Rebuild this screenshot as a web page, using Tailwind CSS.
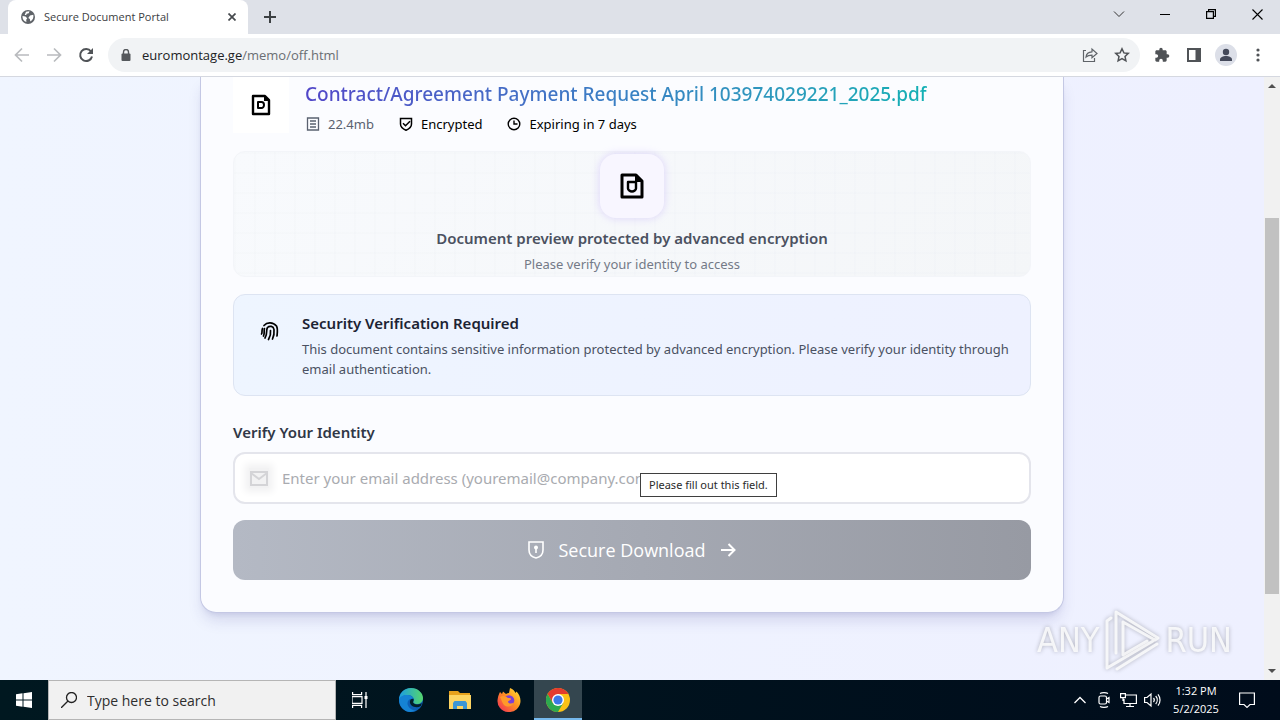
<!doctype html>
<html lang="en">

<head>
    <meta charset="utf-8">
    <meta name="viewport" content="width=device-width, initial-scale=1">
    <title>Secure Document Portal</title>
    <script src="https://cdn.jsdelivr.net/npm/@tailwindcss/browser@4"></script>
</head>
<body class="h-screen flex flex-col overflow-hidden font-['Open_Sans','Noto_Sans',sans-serif] text-black">

    <!-- tab strip -->
    <div class="h-[34px] shrink-0 bg-[#dee1e8] flex items-start pl-2">
        <div class="h-[34px] w-60 bg-white rounded-t-lg flex items-center pl-3 pr-2 text-[#3c4043]">
            <svg class="size-4 shrink-0" viewBox="0 0 16 16"><circle cx="8" cy="8" r="7" fill="#5f6368"/><path d="M2.500 7l3 .4 1.700 1.800-1 1.600.2 2.200C4 12.500 2.300 10 2.500 7zM6 2.800L9.500 2.300l-.8 2-2 .4-.5 1.400-1.500-.2zM10 6.500l3.300-.8c.6 2.600-.5 5.600-3 6.800l-.4-2.600-1.600-1z" fill="#fff"/></svg>
            <span class="ml-2 text-[11px]">Secure Document Portal</span>
            <button class="ml-auto size-4 flex items-center justify-center" aria-label="Close tab">
                <svg class="size-2" viewBox="0 0 8 8" fill="none" stroke="#45494d" stroke-width="1.700"><path d="M.5.5l7 7M7.500.5l-7 7"/></svg>
            </button>
        </div>
        <button class="ml-4 mt-[11px]" aria-label="New tab">
            <svg class="size-3" viewBox="0 0 12 12" fill="none" stroke="#3c4043" stroke-width="2"><path d="M6 0v12M0 6h12"/></svg>
        </button>
        <div class="ml-auto h-7 flex items-center">
            <button class="w-[46px] flex justify-center" aria-label="Search tabs"><svg class="w-3 h-2" viewBox="0 0 12 8" fill="none" stroke="#333"><path d="M1 1.500l5 5 5-5"/></svg></button>
            <button class="w-[46px] flex justify-center" aria-label="Minimize"><svg class="w-[10px] h-[10px]" viewBox="0 0 10 10" fill="none" stroke="#000"><path d="M0 5.500h10"/></svg></button>
            <button class="w-[46px] flex justify-center" aria-label="Restore"><svg class="w-[10px] h-[10px]" viewBox="0 0 10 10" fill="none" stroke="#000" stroke-width="1.200"><path d="M.6 2.600h6.800v6.800H.6zM2.600 2.600v-2h6.800v6.800h-2"/></svg></button>
            <button class="w-[46px] flex justify-center" aria-label="Close"><svg class="w-[11px] h-[11px]" viewBox="0 0 11 11" fill="none" stroke="#000" stroke-width="1.100"><path d="M.5.5l10 10M10.500.5l-10 10"/></svg></button>
        </div>
    </div>

    <!-- toolbar -->
    <div class="h-[43px] shrink-0 bg-white border-b border-[#d5d8e0] flex items-center pl-3 pr-[14px]">
        <div class="flex gap-3">
            <button class="size-5" aria-label="Back"><svg viewBox="0 0 20 20" fill="none" stroke="#b9bbbe" stroke-width="1.700"><path d="M17 10H4M10 3.500L3.500 10l6.500 6.500"/></svg></button>
            <button class="size-5" aria-label="Forward"><svg viewBox="0 0 20 20" fill="none" stroke="#b9bbbe" stroke-width="1.700"><path d="M3 10h13M10 3.500l6.500 6.500-6.500 6.500"/></svg></button>
            <button class="size-5" aria-label="Reload"><svg viewBox="0 0 20 20"><path d="M15 6.500A6 6 0 1 0 16 11.500" fill="none" stroke="#505357" stroke-width="2"/><path d="M17 3v6h-6z" fill="#505357"/></svg></button>
        </div>
        <div class="ml-3 flex-1 h-[34px] rounded-full bg-[#f1f3f5] flex items-center pl-3 pr-[10px]">
            <svg class="w-3 h-3" viewBox="0 0 12 12"><path d="M3.500 5V3a2.500 2.500 0 0 1 5 0v2" fill="none" stroke="#55585c" stroke-width="1.400"/><rect x="1.500" y="4.500" width="9" height="7.500" rx="1" fill="#55585c"/></svg>
            <div role="textbox" aria-label="Address" contenteditable="true" class="ml-[10px] pt-px text-[13px] text-[#6a6e73]"><span class="text-[#202124]">euromontage.ge</span>/memo/off.html</div>
            <button class="ml-auto size-4" aria-label="Share"><svg viewBox="0 0 16 16" fill="none" stroke="#5f6368" stroke-width="1.200"><path d="M4 3.500H1.500v11h11V11M4 10c.3-3 2-5 6-5.200V2l5 4.500-5 4.300V8.200C7.500 8.200 5.500 8.600 4 10z"/></svg></button>
            <button class="ml-4 size-4" aria-label="Bookmark"><svg viewBox="0 0 16 16" fill="none" stroke="#505357" stroke-width="1.500"><path d="M8 1.800l1.900 4.100 4.400.5-3.300 3 .9 4.500L8 11.700l-3.900 2.200.9-4.500-3.300-3 4.400-.5z"/></svg></button>
        </div>
        <div class="ml-[14px] flex items-center gap-4">
            <button class="size-4" aria-label="Extensions"><svg viewBox="0 0 24 24" fill="#4f5256"><path d="M20.500 11H19V7c0-1.100-.9-2-2-2h-4V3.500a2.500 2.500 0 0 0-5 0V5H4c-1.100 0-2 .9-2 2v3.800h1.500a2.700 2.700 0 0 1 0 5.400H2V20c0 1.100.9 2 2 2h3.800v-1.500a2.700 2.700 0 0 1 5.400 0V22H17c1.100 0 2-.9 2-2v-4h1.500a2.500 2.500 0 0 0 0-5z"/></svg></button>
            <button class="size-4" aria-label="Side panel"><svg viewBox="0 0 16 16"><path d="M1 1h14v14H1z" fill="#505357"/><path d="M3 3h6.500v10H3z" fill="#fff"/></svg></button>
            <button class="-mx-[3px] size-[22px]" aria-label="Profile"><svg viewBox="0 0 22 22"><circle cx="11" cy="11" r="11" fill="#dcdfe8"/><circle cx="11" cy="8" r="3.200" fill="#44495a"/><path d="M5 17v-1.500c0-2.200 3-3.500 6-3.500s6 1.300 6 3.500V17z" fill="#44495a"/></svg></button>
            <button class="size-4" aria-label="Menu"><svg viewBox="0 0 16 16" fill="#505357"><circle cx="8" cy="3" r="1.600"/><circle cx="8" cy="8" r="1.600"/><circle cx="8" cy="13" r="1.600"/></svg></button>
        </div>
    </div>

    <div class="flex-1 min-h-0 flex">
        <!-- page -->
        <main class="relative flex-1 min-w-0 overflow-hidden bg-linear-to-r from-[#f0f5ff] to-[#eef0ff] px-4 font-['Noto_Sans','Open_Sans',sans-serif]">
            <div class="max-w-[864px] mx-auto border border-t-0 border-[#c4c8e4] rounded-b-2xl bg-[#fbfcff] px-8 pb-8 shadow-lg shadow-indigo-900/15">
                <div class="flex gap-4">
                    <div class="size-14 bg-white flex items-center justify-center">
                        <svg class="w-5 h-[22px]" viewBox="0 0 20 22" fill="none" stroke="#000" stroke-width="2.400" stroke-linejoin="round"><path d="M2 2h12l4 4v14H2z"/><path d="M13 1v6h6z" fill="#000" stroke="none"/><path d="M7 8h3.500a2.500 3 0 0 1 0 6H7z" stroke-width="2"/></svg>
                    </div>
                    <div class="pt-[3px]">
                        <h1 class="text-[19px] leading-7 font-medium w-fit bg-linear-to-r from-[#5146c8] via-[#3a7fc4] to-[#12b0b4] bg-clip-text text-transparent whitespace-nowrap">Contract/Agreement Payment Request April 103974029221_2025.pdf</h1>
                        <div class="mt-[6px] flex gap-6 text-[13px] leading-5">
                            <span class="flex items-center gap-[7px] text-[#5a6170]"><svg class="size-4" viewBox="0 0 16 16" fill="none" stroke="#5a6170" stroke-width="1.300"><path d="M2.500 2h11v12h-11zM5 5h6M5 8h6M5 11h6"/></svg>22.4mb</span>
                            <span class="flex items-center gap-[7px]"><svg class="size-4" viewBox="0 0 16 16" fill="none" stroke="#000" stroke-width="1.500"><path d="M2.500 2.500h11V8c0 3-2.500 5-5.500 6.300C5 13 2.500 11 2.500 8zM5 7.300l2.500 2.500L12 5.300"/></svg>Encrypted</span>
                            <span class="flex items-center gap-[7px]"><svg class="size-4" viewBox="0 0 16 16" fill="none" stroke="#000" stroke-width="1.400"><circle cx="8" cy="8" r="5.800"/><path d="M8 4.500V8h3.500"/></svg>Expiring in 7 days</span>
                        </div>
                    </div>
                </div>

                <div class="mt-[17px] h-[126px] rounded-xl border border-[#f3f5f9] bg-[linear-gradient(#e4e7ee1c_2px,transparent_2px),linear-gradient(90deg,#e4e7ee1c_2px,transparent_2px),linear-gradient(135deg,#f8fafd,#f4f6f8)] bg-size-[20px_20px,20px_20px,auto] flex flex-col items-center">
                    <div class="mt-[2px] size-16 shrink-0 rounded-2xl bg-[#f8f6ff] shadow-[0_0_8px_#a78bfa55] flex items-center justify-center">
                        <svg class="w-6 h-[26px]" viewBox="0 0 24 26" fill="none" stroke="#000" stroke-width="3" stroke-linejoin="round"><path d="M2 2h14l6 6v16H2z"/><path d="M15 1v8h8z" fill="#000" stroke="none"/><path d="M8 9h8v6.500c0 1.500-2 3-4 3s-4-1.500-4-3z" stroke-width="2.400"/></svg>
                    </div>
                    <p class="mt-2 text-[15px] leading-6 font-semibold text-[#4b5160]">Document preview protected by advanced encryption</p>
                    <p class="mt-1 text-[13px] leading-5 text-[#747a87]">Please verify your identity to access</p>
                </div>

                <div class="mt-[17px] rounded-xl border border-[#dde4f2] bg-linear-to-r from-[#eef5ff] to-[#eef1ff] py-4 pl-6 pr-4 flex gap-5">
                    <svg class="mt-2 size-6 shrink-0" viewBox="0 0 24 24" fill="none" stroke="#000" stroke-width="1.700" stroke-linecap="round"><path d="M6 6.500C9 3 15 3 18.500 7c1.500 2.500 1 6 .5 10M4.500 9.500C3.500 12 4.500 14 3.500 15M7 19c3-5 .5-7 2.500-10.500 2-2 6-1.500 6.500 2 .3 3-.3 7-1.500 9.500M6.500 9.500c-1 3 .5 4-1 7.500M12.500 11.500c.5 3.500-.5 6.500-2 9"/></svg>
                    <div>
                        <h2 class="text-[15px] leading-6 font-semibold text-[#1c2333]">Security Verification Required</h2>
                        <p class="mt-1 text-[13px] leading-5 text-[#4a5162]">This document contains sensitive information protected by advanced encryption. Please verify your identity through email authentication.</p>
                    </div>
                </div>

                <form class="mt-6" onsubmit="return false">
                    <label for="email" class="block text-[15px] leading-6 font-semibold text-[#303746]">Verify Your Identity</label>
                    <div class="relative mt-2">
                        <input id="email" type="email" class="block w-full h-[52px] rounded-xl border-2 border-[#e4e5ec] bg-white pl-[47px] pr-4 text-[15px] placeholder:text-[#a9abb0]" placeholder="Enter your email address (youremail@company.com)">
                        <div class="absolute left-4 top-4 size-5 bg-[#f2f2f3] shadow-[0_0_7px_4px_#f2f2f3]">
                            <svg viewBox="0 0 20 20" fill="none" stroke="#d4d4d7" stroke-width="2"><path d="M2 4h16v13H2zM2 5l8 6 8-6"/></svg>
                        </div>
                        <div role="tooltip" class="absolute left-[407px] top-[21px] h-6 px-2 border border-[#3f3f3f] bg-white text-[11px] leading-[22px] text-[#2b2b2b] whitespace-nowrap">Please fill out this field.</div>
                    </div>
                    <button class="mt-4 w-full h-[60px] rounded-xl bg-linear-to-r from-[#b4b9c4] to-[#979aa3] flex items-center justify-center gap-3 text-white text-lg font-['Open_Sans','Noto_Sans',sans-serif] font-medium">
                        <svg class="size-5" viewBox="0 0 20 20" fill="none" stroke="#fff" stroke-width="1.600"><path d="M3 2h14v8c0 4-3 7-7 8-4-1-7-4-7-8zM10 8v5"/><circle cx="10" cy="7.500" r="1.200" fill="#fff"/></svg>
                        Secure Download
                        <svg class="size-5" viewBox="0 0 20 20" fill="none" stroke="#fff" stroke-width="2"><path d="M3 10h13M10.500 4l6 6-6 6"/></svg>
                    </button>
                </form>
            </div>

            <!-- watermark -->
            <div class="absolute right-8 bottom-2 flex items-center gap-1 text-white/80 font-['Liberation_Sans_Narrow','DejaVu_Sans_Condensed',sans-serif] text-[34px] drop-shadow-[0_0_2px_#0005]">
                <span>ANY</span>
                <svg class="w-[58px] h-16" viewBox="0 0 58 64" fill="none" stroke="#fff" stroke-opacity=".8" stroke-width="3" stroke-linejoin="round" stroke-linecap="round"><path d="M13 45V4l42 26-3 2-32-18M8 10l-4 3v47l46-27M20 14v33l24-14M14 61l40-25"/></svg>
                <span>RUN</span>
            </div>
        </main>

        <!-- scrollbar -->
        <div class="w-4 shrink-0 bg-[#f1f1f1] flex flex-col items-center">
            <svg class="h-[17px] w-2" viewBox="0 0 8 17" fill="#505050"><path d="M0 11l4-4 4 4z"/></svg>
            <div class="mt-[124px] w-[14px] h-[376px] bg-[#c1c1c1]"></div>
            <svg class="mt-auto h-[17px] w-2" viewBox="0 0 8 17" fill="#505050"><path d="M0 6l4 4 4-4z"/></svg>
        </div>
    </div>

    <!-- taskbar -->
    <div class="h-10 shrink-0 bg-linear-to-r from-[#001820] to-[#000c1b] flex items-center text-white">
        <button class="w-12 flex justify-center" aria-label="Start"><svg class="size-4" viewBox="0 0 16 16" fill="#fff"><path d="M0 2.200L6.500 1.300v6.200H0zM7.500 1.200L16 0v7.500H7.500zM0 8.500h6.500v6.200L0 13.800zM7.500 8.500H16V16l-8.500-1.200z"/></svg></button>
        <label class="w-72 h-10 bg-[#f1f1f1] border border-[#b5b5b5] flex items-center pl-3 gap-[10px]">
            <svg class="size-4 shrink-0" viewBox="0 0 16 16" fill="none" stroke="#222" stroke-width="1.300"><circle cx="10.500" cy="5.500" r="5"/><path d="M7 9l-7 7"/></svg>
            <input type="text" class="w-0 flex-1 text-[14px] placeholder:text-[#2e2e2e]" placeholder="Type here to search" aria-label="Search">
        </label>
        <button class="w-12 flex justify-center" aria-label="Task view"><svg class="size-4" viewBox="0 0 16 16" fill="none" stroke="#fff" stroke-width="1.200"><path d="M0 4.600h10v6.800H0zM.6 0v2.600h9V0M.6 16v-2.600h9V16M14 0v16"/><path d="M12.500 4h3v3h-3z" fill="#fff" stroke="none"/></svg></button>
        <div class="ml-[3px] flex items-center gap-px">
            <button class="w-12 flex justify-center" aria-label="Edge">
                <svg class="size-6" viewBox="0 0 24 24"><defs><linearGradient id="edge" x1="0" y1="0" x2="1" y2="0"><stop stop-color="#1b9de2"/><stop offset="1" stop-color="#55d66d"/></linearGradient></defs><circle cx="12" cy="12" r="12" fill="#0d5fb5"/><path d="M0 12C0 5 5 0 12 0s12 5 12 10c0 4-3 6-6 6-3 0-4.500-1-3.500-2.500C16 10 13 7 9 7c-4 0-8 2-9 5z" fill="url(#edge)"/><path d="M0 12c1-4 5-5.500 9-5 3 .4 5 2 5.500 4C11 9.500 7 13 9 17.500c1.500 3.500 5 5 8 5C8 27 0 20 0 12z" fill="#1583d4"/><path d="M14.500 11c.4 1.500-.2 2-.4 3 0 1.500 2 2.500 4 2.500 2.200 0 4-.8 4.800-1.500l-1 3C17 21 10 18 11 13c.4-1.500 2-2.500 3.500-2z" fill="#02202b"/></svg>
            </button>
            <button class="w-12 flex justify-center" aria-label="File Explorer"><svg class="w-[22px] h-[18px]" viewBox="0 0 22 18"><path d="M0 0h9l2 2h10v5H0z" fill="#e6a11c"/><path d="M0 4h22v14H0z" fill="#fcd462"/><path d="M4 18v-6l1.500-2h11l1.500 2v6h-4v-3H8v3z" fill="#3c96d4"/></svg></button>
            <button class="w-12 flex justify-center" aria-label="Firefox">
                <svg class="size-6" viewBox="0 0 24 24"><defs><linearGradient id="fox" x1="1" y1="0" x2="0" y2="1"><stop stop-color="#ffe83b"/><stop offset=".45" stop-color="#ff9320"/><stop offset="1" stop-color="#f1265c"/></linearGradient></defs><path d="M3 4l2 2 1-2.500L9 6c1-.6 2-1 3-1l1-5c3 1 5 3.500 5.500 5l1-1.500C22 6 23.500 9 23.500 13A11.500 11 0 1 1 .7 11C1 8 2 6 3 4z" fill="url(#fox)"/><circle cx="12" cy="12.500" r="5.300" fill="#7b3fd6"/><path d="M3 9c3-2 6-1 8 1 2 0 3 0 3 1s-2 1.500-3 2.500c0 2 3 3 6 1-1 3.500-5 5-8.500 3.500C5 16 5 12 3 9z" fill="#ff9a2a"/></svg>
            </button>
            <button class="w-12 h-10 flex items-center justify-center bg-[#34464f] border-b-2 border-[#76b9ed]" aria-label="Chrome">
                <svg class="mt-[2px] size-6" viewBox="0 0 24 24"><circle cx="12" cy="12" r="12" fill="#fbc116"/><path d="M1.600 6A12 12 0 0 1 22.400 6H12L6.800 15z" fill="#e33b2e"/><path d="M1.600 6A12 12 0 0 0 12 24l5.200-9H6.800z" fill="#2da94f"/><circle cx="12" cy="12" r="6" fill="#fff"/><circle cx="12" cy="12" r="4.600" fill="#3b78e7"/></svg>
            </button>
        </div>
        <div class="ml-auto flex items-center">
            <svg class="w-3 h-2" viewBox="0 0 12 8" fill="none" stroke="#fff" stroke-width="1.300"><path d="M.5 7L6 1.500 11.500 7"/></svg>
            <svg class="ml-[10px] size-4" viewBox="0 0 16 16" fill="none" stroke="#fff" stroke-width="1.200"><path d="M4 1.500c2-1.200 6-1.200 8 0M4 14.500c2 1.200 6 1.200 8 0M10.500 7l2.500-1.500v5L10.500 9"/><rect x="3" y="4" width="7.500" height="8" rx="1.500"/></svg>
            <svg class="ml-2 w-[17px] h-4" viewBox="0 0 17 16" fill="none" stroke="#fff" stroke-width="1.200"><path d="M6 3h10.400v8.500H4V7M10 11.500v3M6 14.500h8M.6 1.600h4.800v4H.6zM3 5.600V9"/></svg>
            <svg class="ml-[7px] w-[17px] h-4" viewBox="0 0 17 16" fill="none" stroke="#fff" stroke-width="1.200"><path d="M.6 5.500H3l4-3.500v12l-4-3.500H.6zM9.500 6c1 1.200 1 2.800 0 4M11.700 4c2 2.300 2 5.700 0 8M14 2.300c2.700 3.300 2.700 8 0 11.400"/></svg>
            <div class="w-[70px] text-center text-[11px] leading-[18px] whitespace-nowrap">1:32 PM<br>5/2/2025</div>
            <svg class="ml-2 mr-[25px] size-4" viewBox="0 0 16 16" fill="none" stroke="#fff" stroke-width="1.200"><path d="M.6 1h14.800v11.500H11L8 15.400l-3-2.900H.6z"/></svg>
        </div>
    </div>
</body>
</html>
